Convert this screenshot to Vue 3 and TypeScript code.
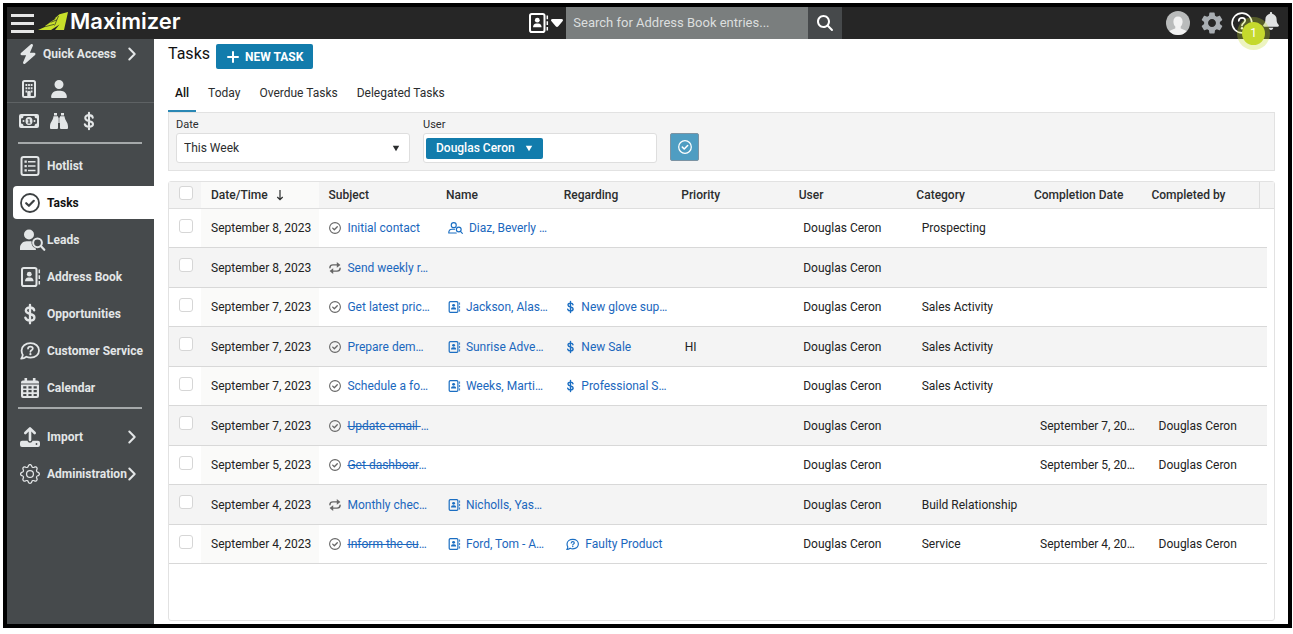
<script setup lang="ts">
import { ref } from 'vue'

interface Icon {
  box: string
  body: string
}

interface Link {
  icon: string
  text: string
  cut?: boolean
  done?: boolean
}

interface Task {
  date: string
  subject: Link
  name?: Link
  regarding?: Link
  priority?: string
  user: string
  category?: string
  completed?: string
  completedBy?: string
}

const dollar =
  '<path d="M8 1v22M13 7.500C12.500 5 10.500 4.200 8 4.200c-2.800 0-5 1.300-5 3.700 0 5.600 10.300 2.600 10.300 8.200 0 2.400-2.300 3.700-5.300 3.700-2.800 0-4.900-.8-5.600-3.400" fill="none" stroke="currentColor" stroke-width="2.800" stroke-linecap="round"/>'

const gearRing =
  '<path d="M8 4.754a3.246 3.246 0 1 0 0 6.492 3.246 3.246 0 0 0 0-6.492zM5.754 8a2.246 2.246 0 1 1 4.492 0 2.246 2.246 0 0 1-4.492 0z"/><path d="M9.796 1.343c-.527-1.79-3.065-1.79-3.592 0l-.094.319a.873.873 0 0 1-1.255.52l-.292-.16c-1.64-.892-3.433.902-2.54 2.541l.159.292a.873.873 0 0 1-.52 1.255l-.319.094c-1.79.527-1.79 3.065 0 3.592l.319.094a.873.873 0 0 1 .52 1.255l-.16.292c-.892 1.64.901 3.434 2.541 2.54l.292-.159a.873.873 0 0 1 1.255.52l.094.319c.527 1.79 3.065 1.79 3.592 0l.094-.319a.873.873 0 0 1 1.255-.52l.292.16c1.64.893 3.434-.902 2.54-2.541l-.159-.292a.873.873 0 0 1 .52-1.255l.319-.094c1.79-.527 1.79-3.065 0-3.592l-.319-.094a.873.873 0 0 1-.52-1.255l.16-.292c.893-1.64-.902-3.433-2.541-2.54l-.292.159a.873.873 0 0 1-1.255-.52l-.094-.319zm-2.633.283c.246-.835 1.428-.835 1.674 0l.094.319a1.873 1.873 0 0 0 2.693 1.115l.291-.16c.764-.415 1.6.42 1.184 1.185l-.159.292a1.873 1.873 0 0 0 1.116 2.692l.318.094c.835.246.835 1.428 0 1.674l-.319.094a1.873 1.873 0 0 0-1.115 2.693l.16.291c.415.764-.42 1.6-1.185 1.184l-.291-.159a1.873 1.873 0 0 0-2.693 1.116l-.094.318c-.246.835-1.428.835-1.674 0l-.094-.319a1.873 1.873 0 0 0-2.692-1.115l-.292.16c-.764.415-1.6-.42-1.184-1.185l.159-.291A1.873 1.873 0 0 0 1.945 8.93l-.319-.094c-.835-.246-.835-1.428 0-1.674l.319-.094A1.873 1.873 0 0 0 3.06 4.377l-.16-.292c-.415-.764.42-1.6 1.185-1.184l.292.159a1.873 1.873 0 0 0 2.692-1.115l.094-.319z"/>'

const icons: Record<string, Icon> = {
  bolt: {
    box: '0 0 448 512',
    body: '<path d="M349.400 44.600c5.900-13.700 1.500-29.700-10.600-38.500s-28.600-8-39.900 1.800l-256 224c-10 8.800-13.600 22.900-8.900 35.300S50.700 288 64 288H175.500L98.600 467.400c-5.900 13.700-1.500 29.700 10.600 38.500s28.600 8 39.900-1.800l256-224c10-8.800 13.600-22.900 8.900-35.300s-16.600-20.700-30-20.700H272.500L349.400 44.600z"/>',
  },
  building: {
    box: '0 0 14 18',
    body: '<rect x="1" y="1" width="12" height="16" rx="1.500" fill="none" stroke="currentColor" stroke-width="2"/><path d="M3.500 4h1.800v2H3.500zM6.100 4h1.800v2H6.100zM8.700 4h1.800v2H8.700zM3.500 7.200h1.800v2H3.500zM6.100 7.200h1.800v2H6.100zM8.700 7.200h1.800v2H8.700zM3.500 10.400h1.800v2H3.500zM8.700 10.400h1.800v2H8.700zM5.300 17v-4.500a1.700 1.700 0 0 1 3.400 0V17z"/>',
  },
  person: {
    box: '0 0 448 512',
    body: '<path d="M224 256A128 128 0 1 0 224 0a128 128 0 1 0 0 256zm-45.700 48C79.800 304 0 383.800 0 482.300C0 498.700 13.300 512 29.700 512H418.300c16.400 0 29.700-13.300 29.700-29.700C448 383.800 368.200 304 269.700 304H178.300z"/>',
  },
  money: {
    box: '0 0 20 14',
    body: '<path fill-rule="evenodd" d="M2 0h16a2 2 0 0 1 2 2v10a2 2 0 0 1-2 2H2a2 2 0 0 1-2-2V2a2 2 0 0 1 2-2zM4.500 2A2.500 2.500 0 0 1 2 4.500v5A2.500 2.500 0 0 1 4.500 12h11A2.500 2.500 0 0 1 18 9.500v-5A2.500 2.500 0 0 1 15.500 2z"/><path fill-rule="evenodd" d="M10 3a3.500 4 0 1 1 0 8 3.500 4 0 0 1 0-8zM8.700 5.200v1h.7v2.400h-.7v.9h2.700v-.9h-.7V5.200z"/><circle cx="4.500" cy="7" r="1"/><circle cx="15.500" cy="7" r="1"/>',
  },
  binoculars: {
    box: '0 0 18 16',
    body: '<path d="M4 0h3v2.500H4zM11 0h3v2.500h-3zM3.500 3.300H8V15a1 1 0 0 1-1 1H1a1 1 0 0 1-1-1v-1.500C0 9 3 8 3.500 3.300zM10 3.300h4.500C15 8 18 9 18 13.500V15a1 1 0 0 1-1 1h-6a1 1 0 0 1-1-1zM8.300 4.500h1.400V10H8.300z"/>',
  },
  dollar: { box: '0 0 16 24', body: dollar },
  navDollar: { box: '-4 0 24 24', body: dollar },
  list: {
    box: '0 0 20 20',
    body: '<rect x="1.500" y="1" width="17" height="18" rx="2" fill="none" stroke="currentColor" stroke-width="2"/><path d="M4.500 4.500h2.300v2.300H4.500zM4.500 8.900h2.300v2.300H4.500zM4.500 13.300h2.300v2.300H4.500zM8 4.900h7.500v1.500H8zM8 9.300h7.500v1.500H8zM8 13.700h7.500v1.500H8z"/>',
  },
  check: {
    box: '0 0 20 20',
    body: '<circle cx="10" cy="10" r="9" fill="none" stroke="currentColor" stroke-width="1.800"/><path d="M6.200 10.200l2.700 2.600 4.900-5" fill="none" stroke="currentColor" stroke-width="2.200" stroke-linecap="round" stroke-linejoin="round"/>',
  },
  lead: {
    box: '0 0 20 20',
    body: '<circle cx="9" cy="4.500" r="5"/><path d="M6.500 11.200h5c-.3 3.600 1.200 6 4 6.800l.5 2H0v-2c0-4 3-6.800 6.500-6.800z"/><circle cx="17.500" cy="12.800" r="4.400" fill="none" stroke="currentColor" stroke-width="2"/><path d="M20.800 16l3.500 3.800" stroke="currentColor" stroke-width="2.200" stroke-linecap="round"/>',
  },
  leadLine: {
    box: '0 0 30 24',
    body: '<g fill="none" stroke="currentColor" stroke-width="2.300" stroke-linecap="round" stroke-linejoin="round"><circle cx="11.500" cy="6.300" r="5"/><path d="M13 14.500H8c-4 0-6.500 3-6.500 7.500h15"/><circle cx="21.500" cy="15" r="4.800"/><path d="M25 18.700l3.700 4"/></g>',
  },
  book: {
    box: '0 0 20 20',
    body: '<rect x="2" y="1" width="14.500" height="18" rx="1.800" fill="none" stroke="currentColor" stroke-width="2"/><circle cx="9.300" cy="7.200" r="2.400"/><path d="M5 14.300c0-2.700 1.500-3.900 3.200-3.900h2.200c1.700 0 3.200 1.200 3.200 3.900z"/><path d="M19.300 2.500v3.700M19.300 8.200v3.700M19.300 13.900v3.700" stroke="currentColor" stroke-width="1.500"/>',
  },
  bubble: {
    box: '0 0 20 20',
    body: '<path d="M10.500 2.200c5 0 8.500 3 8.500 7.200s-3.500 7.200-8.500 7.200c-1.500 0-2.900-.3-4.100-.9-1.300 1-3 1.900-5.200 2 .9-1.200 1.400-2.400 1.600-3.800C2 12.600 1.600 11.100 1.600 9.400c0-4.200 3.900-7.200 8.900-7.200z" fill="none" stroke="currentColor" stroke-width="1.800" stroke-linejoin="round"/><path d="M8 7.600c.2-2.700 4.800-2.500 4.800 0 0 1.700-2.400 1.700-2.400 3.200" fill="none" stroke="currentColor" stroke-width="1.700" stroke-linecap="round"/><circle cx="10.400" cy="13.200" r="1.100"/>',
  },
  calendar: {
    box: '0 0 20 20',
    body: '<path d="M4.500 0h2.600v2.500h5.800V0h2.600v2.500H17a2 2 0 0 1 2 2v1H1v-1a2 2 0 0 1 2-2h1.500z"/><path fill-rule="evenodd" d="M1 6.500h18V18a2 2 0 0 1-2 2H3a2 2 0 0 1-2-2zM3.200 8.300v2.200h3.200V8.300zm5.200 0v2.200h3.200V8.300zm5.200 0v2.200h3.200V8.300zM3.200 12.100v2.200h3.200v-2.200zm5.200 0v2.200h3.200v-2.200zm5.200 0v2.200h3.200v-2.200zM3.200 15.900v2.200h3.200v-2.200zm5.200 0v2.200h3.200v-2.200zm5.200 0v2.200h3.200v-2.200z"/>',
  },
  upload: {
    box: '0 0 20 20',
    body: '<path d="M10 13V1.800M5.300 6L10 1.400 14.700 6" fill="none" stroke="currentColor" stroke-width="2.600" stroke-linecap="round" stroke-linejoin="round"/><path fill-rule="evenodd" d="M2 13.800h5.500c.3 1.200 1.300 2 2.500 2s2.200-.8 2.500-2H18a2 2 0 0 1 2 2V18a2 2 0 0 1-2 2H2a2 2 0 0 1-2-2v-2.200a2 2 0 0 1 2-2zm14.500 2.300a.9.900 0 1 0 0 1.800.9.900 0 0 0 0-1.800z"/>',
  },
  gearLine: { box: '0 0 16 16', body: gearRing },
  repeat: {
    box: '0 0 20 20',
    body: '<path d="M1.500 9.500C1.500 6.300 3.500 4.800 6.500 4.800h8M18.500 10.500c0 3.200-2 4.700-5 4.700h-8" fill="none" stroke="currentColor" stroke-width="2.400" stroke-linecap="round"/><path d="M13 0l6 4.800-6 4.800zM7 10.400v9.600l-6-4.800z"/>',
  },
  search: {
    box: '0 0 512 512',
    body: '<path d="M416 208c0 45.900-14.900 88.300-40 122.700L502.600 457.400c12.500 12.500 12.500 32.800 0 45.300s-32.800 12.500-45.300 0L330.700 376c-34.400 25.200-76.800 40-122.700 40C93.100 416 0 322.900 0 208S93.100 0 208 0S416 93.100 416 208zM208 352a144 144 0 1 0 0-288 144 144 0 1 0 0 288z"/>',
  },
  bell: {
    box: '0 0 448 512',
    body: '<path d="M224 0c-17.700 0-32 14.300-32 32V51.200C119 66 64 130.600 64 208v18.800c0 47-17.300 92.400-48.500 127.600l-7.400 8.300c-8.400 9.400-10.400 22.900-5.300 34.400S19.400 416 32 416H416c12.600 0 24-7.400 29.200-18.900s3.100-25-5.300-34.400l-7.400-8.300C401.300 319.200 384 273.900 384 226.800V208c0-77.400-55-142-128-156.800V32c0-17.700-14.300-32-32-32zm45.300 493.300c12-12 18.700-28.300 18.700-45.300H160c0 17 6.700 33.300 18.700 45.300s28.300 18.700 45.300 18.700s33.300-6.700 45.300-18.700z"/>',
  },
  gear: {
    box: '2 2 20 20',
    body: '<path d="M19.140 12.940c.04-.3.060-.61.060-.94 0-.32-.02-.64-.07-.94l2.030-1.580a.49.490 0 0 0 .12-.61l-1.920-3.320a.488.488 0 0 0-.59-.22l-2.390.96c-.5-.38-1.030-.7-1.620-.94l-.36-2.540a.484.484 0 0 0-.48-.41h-3.840c-.24 0-.43.170-.47.410l-.36 2.540c-.59.240-1.130.570-1.620.940l-2.390-.96c-.22-.08-.47 0-.59.220L2.740 8.870c-.12.210-.08.470.12.610l2.030 1.580c-.05.300-.09.630-.09.940s.02.640.07.940l-2.030 1.580a.49.490 0 0 0-.12.610l1.920 3.320c.12.220.37.290.59.220l2.390-.96c.5.380 1.030.7 1.620.940l.36 2.540c.05.240.24.410.48.410h3.840c.24 0 .44-.17.470-.41l.36-2.540c.59-.24 1.130-.56 1.620-.94l2.390.96c.22.080.47 0 .59-.22l1.920-3.320c.12-.22.070-.47-.12-.61l-2.010-1.580zM12 15.600c-1.980 0-3.600-1.620-3.600-3.600s1.620-3.600 3.600-3.600 3.600 1.620 3.600 3.600-1.620 3.600-3.600 3.600z"/>',
  },
  help: {
    box: '0 0 22 22',
    body: '<circle cx="11" cy="11" r="9.900" fill="none" stroke="currentColor" stroke-width="1.600"/><path d="M7.800 8.800c.2-4 6.400-3.700 6.400-.2 0 2.400-3.200 2.500-3.200 4.900" fill="none" stroke="currentColor" stroke-width="1.700" stroke-linecap="round"/><circle cx="11" cy="16.300" r="1.200"/>',
  },
  avatar: {
    box: '0 0 24 24',
    body: '<circle cx="12" cy="12" r="12" fill="#b9bbbb"/><path d="M12 5.500c2.900 0 4.600 2.100 4.600 5 0 2.200-.9 4-1.900 5.100v1.600c0 .8 4.400 1.300 5.800 3.300A12 12 0 0 1 12 24a12 12 0 0 1-8.500-3.500c1.400-2 5.800-2.500 5.800-3.300v-1.600c-1-1.100-1.900-2.900-1.900-5.100 0-2.900 1.700-5 4.600-5z" fill="#f2f2f2"/>',
  },
  chevron: {
    box: '0 0 8 14',
    body: '<path d="M1.300 1.500L6.700 7l-5.400 5.500" fill="none" stroke="currentColor" stroke-width="2" stroke-linecap="round" stroke-linejoin="round"/>',
  },
  caret: { box: '0 0 10 8', body: '<path d="M1 .5h8L5 7.500z"/>' },
  wideCaret: {
    box: '0 0 14 10',
    body: '<path d="M2.500 1h9c1.500 0 2 1.300 1 2.300L8.300 8.300c-.8.800-1.800.8-2.600 0L1.500 3.300C.5 2.300 1 1 2.500 1z"/>',
  },
  plus: {
    box: '0 0 12 12',
    body: '<path d="M6 1v10M1 6h10" stroke="currentColor" stroke-width="2" stroke-linecap="round"/>',
  },
  arrowDown: {
    box: '0 0 10 12',
    body: '<path d="M5 1v9.500M2.300 8L5 10.700 7.700 8" fill="none" stroke="currentColor" stroke-width="1.200"/>',
  },
  road: {
    box: '0 0 30 18',
    body: '<path d="M30 0L26 18H17l4.500-5.500-8.500 5.500H0l8-3.500-1-.5 5-3.500h-.5L18 6.500h-1.500L21.500 2.300z" fill="#c8e02a"/><path d="M7.500 14.600l8.500-2.200M12.500 10.400l6.500-2.600M20.500 4l-4 9.500" stroke="#262626" stroke-width=".7"/>',
  },
}

const quickTop = [
  { icon: 'building', label: 'Companies' },
  { icon: 'person', label: 'Individuals' },
]
const quickBottom = [
  { icon: 'money', label: 'Sales' },
  { icon: 'binoculars', label: 'Find' },
  { icon: 'dollar', label: 'Opportunity' },
]

const modules = [
  { icon: 'list', label: 'Hotlist' },
  { icon: 'check', label: 'Tasks' },
  { icon: 'lead', label: 'Leads' },
  { icon: 'book', label: 'Address Book' },
  { icon: 'navDollar', label: 'Opportunities' },
  { icon: 'bubble', label: 'Customer Service' },
  { icon: 'calendar', label: 'Calendar' },
]
const tools = [
  { icon: 'upload', label: 'Import' },
  { icon: 'gearLine', label: 'Administration' },
]

const tabs = ['All', 'Today', 'Overdue Tasks', 'Delegated Tasks']
const activeTab = ref('All')
const range = ref('This Week')

const columns = ['Date/Time', 'Subject', 'Name', 'Regarding', 'Priority', 'User', 'Category', 'Completion Date', 'Completed by']

const user = 'Douglas Ceron'
const tasks: Task[] = [
  { date: 'September 8, 2023', subject: { icon: 'check', text: 'Initial contact' }, name: { icon: 'leadLine', text: 'Diaz, Beverly ', cut: true }, user, category: 'Prospecting' },
  { date: 'September 8, 2023', subject: { icon: 'repeat', text: 'Send weekly r', cut: true }, user },
  { date: 'September 7, 2023', subject: { icon: 'check', text: 'Get latest pric', cut: true }, name: { icon: 'book', text: 'Jackson, Alas', cut: true }, regarding: { icon: 'dollar', text: 'New glove sup', cut: true }, user, category: 'Sales Activity' },
  { date: 'September 7, 2023', subject: { icon: 'check', text: 'Prepare dem', cut: true }, name: { icon: 'book', text: 'Sunrise Adve', cut: true }, regarding: { icon: 'dollar', text: 'New Sale' }, priority: 'HI', user, category: 'Sales Activity' },
  { date: 'September 7, 2023', subject: { icon: 'check', text: 'Schedule a fo', cut: true }, name: { icon: 'book', text: 'Weeks, Marti', cut: true }, regarding: { icon: 'dollar', text: 'Professional S', cut: true }, user, category: 'Sales Activity' },
  { date: 'September 7, 2023', subject: { icon: 'check', text: 'Update email ', cut: true, done: true }, user, completed: 'September 7, 20…', completedBy: user },
  { date: 'September 5, 2023', subject: { icon: 'check', text: 'Get dashboar', cut: true, done: true }, user, completed: 'September 5, 20…', completedBy: user },
  { date: 'September 4, 2023', subject: { icon: 'repeat', text: 'Monthly chec', cut: true }, name: { icon: 'book', text: 'Nicholls, Yas', cut: true }, user, category: 'Build Relationship' },
  { date: 'September 4, 2023', subject: { icon: 'check', text: 'Inform the cu', cut: true, done: true }, name: { icon: 'book', text: 'Ford, Tom - A', cut: true }, regarding: { icon: 'bubble', text: 'Faulty Product' }, user, category: 'Service', completed: 'September 4, 20…', completedBy: user },
]
</script>

<template>
  <div class="page">
    <div class="frame">
      <header class="topbar">
        <div class="brand">
          <button class="menu" type="button" aria-label="Menu"><i></i><i></i><i></i></button>
          <svg class="logo" :viewBox="icons.road.box" v-html="icons.road.body"></svg>
          <span class="wordmark">Maximizer</span>
        </div>
        <form class="search" @submit.prevent>
          <button class="scope" type="button" aria-label="Search in Address Book">
            <svg class="i20" :viewBox="icons.book.box" v-html="icons.book.body"></svg>
            <svg class="wide-caret" :viewBox="icons.wideCaret.box" v-html="icons.wideCaret.body"></svg>
          </button>
          <input type="search" placeholder="Search for Address Book entries..." aria-label="Search for Address Book entries" />
          <button class="go" type="submit" aria-label="Search">
            <svg class="i16" :viewBox="icons.search.box" v-html="icons.search.body"></svg>
          </button>
        </form>
        <div class="account">
          <button type="button" aria-label="Profile"><svg class="avatar" :viewBox="icons.avatar.box" v-html="icons.avatar.body"></svg></button>
          <button class="settings" type="button" aria-label="Settings"><svg class="i22" :viewBox="icons.gear.box" v-html="icons.gear.body"></svg></button>
          <button class="help" type="button" aria-label="Help">
            <svg class="i22" :viewBox="icons.help.box" v-html="icons.help.body"></svg>
            <span class="badge">1</span>
          </button>
          <button class="bell" type="button" aria-label="Notifications"><svg class="i18" :viewBox="icons.bell.box" v-html="icons.bell.body"></svg></button>
        </div>
      </header>

      <div class="body">
        <nav class="sidebar">
          <a class="item quick" href="#">
            <svg class="i20" :viewBox="icons.bolt.box" v-html="icons.bolt.body"></svg>
            <span>Quick Access</span>
            <svg class="chevron" :viewBox="icons.chevron.box" v-html="icons.chevron.body"></svg>
          </a>
          <div class="shortcuts top">
            <a v-for="q in quickTop" :key="q.icon" href="#" :aria-label="q.label"><svg class="i18" :viewBox="icons[q.icon].box" v-html="icons[q.icon].body"></svg></a>
          </div>
          <div class="shortcuts">
            <a v-for="q in quickBottom" :key="q.icon" href="#" :aria-label="q.label"><svg :class="q.icon === 'money' ? 'i20' : 'i18'" :viewBox="icons[q.icon].box" v-html="icons[q.icon].body"></svg></a>
          </div>
          <hr />
          <div class="group">
            <a v-for="m in modules" :key="m.label" class="item" :class="{ active: m.label === 'Tasks' }" href="#">
              <svg class="i20" :viewBox="icons[m.icon].box" v-html="icons[m.icon].body"></svg>
              <span>{{ m.label }}</span>
            </a>
          </div>
          <hr />
          <div class="group tools">
            <a v-for="t in tools" :key="t.label" class="item" href="#">
              <svg class="i20" :viewBox="icons[t.icon].box" v-html="icons[t.icon].body"></svg>
              <span>{{ t.label }}</span>
              <svg class="chevron" :viewBox="icons.chevron.box" v-html="icons.chevron.body"></svg>
            </a>
          </div>
        </nav>

        <main class="content">
          <div class="heading">
            <h1>Tasks</h1>
            <button class="new-task" type="button">
              <svg class="i12" :viewBox="icons.plus.box" v-html="icons.plus.body"></svg>
              NEW TASK
            </button>
          </div>

          <div class="tabs" role="tablist">
            <button v-for="t in tabs" :key="t" type="button" role="tab" :aria-selected="t === activeTab" :class="{ active: t === activeTab }" @click="activeTab = t">{{ t }}</button>
          </div>

          <section class="filters">
            <div class="field">
              <label for="date-range">Date</label>
              <div class="box">
                <select id="date-range" v-model="range">
                  <option>This Week</option>
                  <option>Today</option>
                </select>
                <svg class="caret" :viewBox="icons.caret.box" v-html="icons.caret.body"></svg>
              </div>
            </div>
            <div class="field">
              <label for="user-filter">User</label>
              <div class="box users">
                <button class="chip" type="button">
                  {{ user }}
                  <svg class="caret" :viewBox="icons.caret.box" v-html="icons.caret.body"></svg>
                </button>
                <input id="user-filter" type="text" />
              </div>
            </div>
            <button class="apply" type="button" aria-label="Apply filters">
              <svg class="i14" :viewBox="icons.check.box" v-html="icons.check.body"></svg>
            </button>
          </section>

          <div class="grid">
            <table>
              <thead>
                <tr>
                  <th class="pick"><input type="checkbox" aria-label="Select all tasks" /></th>
                  <th v-for="(c, n) in columns" :key="c" :class="{ sorted: n === 0 }" scope="col">
                    {{ c }}
                    <svg v-if="n === 0" class="i12" :viewBox="icons.arrowDown.box" v-html="icons.arrowDown.body"></svg>
                  </th>
                </tr>
              </thead>
              <tbody>
                <tr v-for="(t, n) in tasks" :key="n">
                  <td class="pick"><input type="checkbox" :aria-label="'Select task ' + (n + 1)" /></td>
                  <td class="sorted">{{ t.date }}</td>
                  <td v-for="(l, k) in [t.subject, t.name, t.regarding]" :key="k">
                    <template v-if="l">
                      <svg :class="[l.icon, { muted: k === 0 }]" :viewBox="icons[l.icon].box" v-html="icons[l.icon].body"></svg>
                      <a href="#"><span :class="{ done: l.done }">{{ l.text }}</span><template v-if="l.cut">…</template></a>
                    </template>
                  </td>
                  <td>{{ t.priority }}</td>
                  <td>{{ t.user }}</td>
                  <td>{{ t.category }}</td>
                  <td>{{ t.completed }}</td>
                  <td>{{ t.completedBy }}</td>
                </tr>
              </tbody>
            </table>
          </div>
        </main>
      </div>
    </div>
  </div>
</template>

<style>
body {
  background: #fff;
}
</style>

<style scoped>
* {
  box-sizing: border-box;
}
.page {
  display: flex;
  min-height: 100vh;
  padding: 3px 1px 6px 3px;
  color: #2b2d2e;
  font: 12px/16px Roboto, 'Liberation Sans', sans-serif;
}
.frame {
  display: flex;
  flex: 1;
  flex-direction: column;
  min-width: 0;
  border: 4px solid #000;
}
svg {
  display: block;
  flex: none;
  overflow: visible;
  fill: currentColor;
}
button {
  display: flex;
  align-items: center;
  justify-content: center;
  padding: 0;
  border: 0;
  background: none;
  color: inherit;
  font: inherit;
}
input,
select {
  color: inherit;
  font: inherit;
}
a {
  color: inherit;
  text-decoration: none;
}
.i12 { width: 12px; height: 12px; }
.i14 { width: 14px; height: 14px; }
.i16 { width: 16px; height: 16px; }
.i18 { width: 18px; height: 18px; }
.i20 { width: 20px; height: 20px; }
.i22 { width: 22px; height: 22px; }

.topbar {
  display: flex;
  height: 32px;
  background: #262626;
  color: #fff;
}
.brand {
  display: flex;
  flex: 13 1 0;
  align-items: center;
  padding-left: 4px;
}
.menu {
  flex-direction: column;
  gap: 5px;
  width: 23px;
  color: #e6e6e6;
}
.menu i {
  width: 100%;
  height: 3px;
  background: currentColor;
}
.logo {
  width: 30px;
  height: 18px;
  margin: 0 2px 5px 4px;
}
.wordmark {
  padding-bottom: 4px;
  font: 600 22px/28px Inter, Roboto, sans-serif;
}
.search {
  display: flex;
  margin: 0;
  font-size: 13px;
}
.scope {
  gap: 2px;
  padding-right: 2px;
}
.wide-caret {
  width: 14px;
  height: 10px;
}
.search input {
  width: 242px;
  padding: 0 7px;
  border: 0;
  border-radius: 0;
  outline: 0;
  background: #7a7e7e;
  appearance: none;
}
.search input::placeholder {
  color: #dcdede;
  opacity: 1;
}
.go {
  width: 34px;
  background: #46494b;
}
.account {
  display: flex;
  flex: 11 1 0;
  align-items: center;
  justify-content: flex-end;
  padding-right: 8px;
}
.avatar {
  width: 24px;
  height: 24px;
}
.settings {
  margin: 0 8px 0 11px;
  color: #a9aeb3;
}
.help {
  position: relative;
}
.bell {
  margin-left: 9px;
  padding-bottom: 4px;
  color: #e0e2e3;
}
.badge {
  position: absolute;
  top: 10px;
  left: 11px;
  width: 23px;
  height: 23px;
  border-radius: 50%;
  background: #c5d92d;
  box-shadow: 0 0 0 5px rgb(197 217 45 / 30%);
  color: #fff;
  line-height: 23px;
}

.body {
  display: flex;
  flex: 1;
}
.sidebar {
  width: 147px;
  flex: none;
  background: #464a4c;
  color: #e3e6e7;
  font-weight: 700;
}
.item {
  display: flex;
  align-items: center;
  height: 33px;
  margin-left: 6px;
  padding-left: 7px;
  white-space: nowrap;
}
.item span {
  padding-left: 7px;
}
.item.quick {
  height: 30px;
  padding-left: 5px;
}
.item.quick span {
  padding-left: 5px;
}
.chevron {
  width: 8px;
  height: 14px;
  margin: 0 18px 0 auto;
}
.shortcuts {
  display: flex;
  gap: 12px;
  height: 36px;
  align-items: center;
  padding-left: 13px;
}
.shortcuts a {
  display: flex;
  justify-content: center;
  width: 18px;
}
.shortcuts.top {
  height: 34px;
  padding-top: 6px;
  border-bottom: 1px solid #5e6264;
}
hr {
  height: 2px;
  margin: 3px 12px 0 11px;
  border: 0;
  background: #a5a9aa;
}
.group {
  display: flex;
  flex-direction: column;
  gap: 4px;
  padding-top: 5px;
}
.group.tools {
  padding-top: 11px;
}
.item.active {
  border-radius: 4px 0 0 4px;
  background: #fff;
  color: #3c4042;
}
.item.active span {
  color: #111;
}

.content {
  display: flex;
  flex: 1;
  flex-direction: column;
  min-width: 0;
  padding: 5px 13px 3px 14px;
  background: #fff;
}
.heading {
  display: flex;
  gap: 6px;
}
h1 {
  margin: 0;
  color: #111;
  font-size: 16px;
  font-weight: 400;
  line-height: 20px;
}
.new-task {
  gap: 6px;
  height: 25px;
  padding: 0 10px 0 11px;
  border-radius: 2px;
  background: #127cac;
  color: #fff;
  font-weight: 700;
}
.tabs {
  display: flex;
  margin-top: 5px;
}
.tabs button {
  height: 38px;
  padding: 2px 7px 0;
  border-bottom: 2px solid transparent;
}
.tabs button + button {
  margin-left: 5px;
}
.tabs .active {
  border-color: #2a88b5;
  color: #111;
  font-weight: 500;
}
.filters {
  display: flex;
  align-items: flex-end;
  gap: 13px;
  height: 59px;
  padding: 0 7px 7px;
  border: 1px solid #e2e2e2;
  background: #f4f4f4;
}
.field {
  width: 234px;
}
.field label {
  display: block;
  font-size: 11px;
  line-height: 16px;
}
.box {
  position: relative;
  display: flex;
  align-items: center;
  height: 30px;
  border: 1px solid #dedede;
  border-radius: 3px;
  background: #fff;
}
.box select {
  width: 100%;
  height: 100%;
  padding: 0 7px;
  border: 0;
  background: none;
  appearance: none;
}
.caret {
  width: 8px;
  height: 7px;
}
.box > .caret {
  position: absolute;
  right: 9px;
  pointer-events: none;
}
.users {
  padding: 0 2px;
}
.users input {
  flex: 1;
  min-width: 0;
  border: 0;
  outline: 0;
  background: none;
}
.chip {
  gap: 10px;
  height: 21px;
  padding: 0 10px;
  border-radius: 2px;
  background: #127cac;
  color: #fff;
  font-weight: 500;
}
.apply {
  width: 29px;
  height: 28px;
  margin-bottom: 2px;
  border: 1px solid #7c93a3;
  border-radius: 2px;
  background: #4f9dc2;
  color: #fff;
}

.grid {
  flex: 1;
  margin-top: 10px;
  border: 1px solid #e2e2e2;
  border-radius: 3px;
}
table,
thead,
tbody {
  display: block;
}
tr {
  display: grid;
  grid-template-columns: 32px repeat(9, minmax(0, 1fr));
}
th,
td {
  display: flex;
  align-items: center;
  gap: 6px;
  padding: 0 0 0 10px;
  white-space: nowrap;
}
thead {
  padding-right: 14px;
  border-bottom: 1px solid #dedede;
  background: #f4f4f4;
}
thead tr {
  height: 26px;
  border-right: 1px solid #dedede;
}
th {
  font-weight: 500;
}
.sorted {
  background: #fafaf9;
}
tbody {
  padding-right: 7px;
}
tbody tr {
  height: 39px;
  border-bottom: 1px solid #d8d8d8;
}
tbody tr:nth-child(even) {
  height: 40px;
  background: #f4f4f4;
}
.pick {
  padding-bottom: 5px;
}
.pick input {
  width: 14px;
  height: 14px;
  margin: 0;
  border: 1px solid #d6d6d6;
  border-radius: 3px;
  background: #fff;
  appearance: none;
}
tbody tr:nth-child(even) .sorted {
  background: none;
}
td {
  color: #222;
}
td svg {
  width: 12px;
  height: 12px;
  color: #1b6ec2;
}
td svg.muted {
  color: #666;
}
td svg.leadLine {
  width: 15px;
}
td svg.dollar {
  width: 9px;
}
td svg.bubble {
  width: 13px;
  height: 13px;
}
td a {
  color: #1b67bd;
  white-space: pre;
}
.done {
  text-decoration: line-through;
}
</style>
